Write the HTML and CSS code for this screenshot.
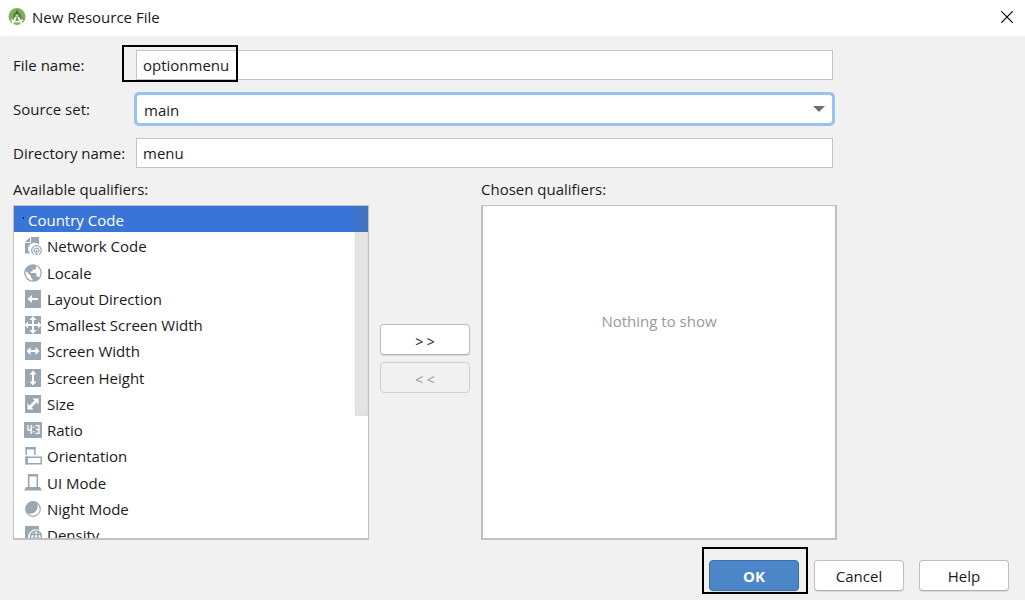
FILE: index.html
```html
<!DOCTYPE html>
<html lang="en">
<head>
<meta charset="utf-8">
<title>New Resource File</title>
<link rel="stylesheet" href="styles.css">
</head>
<body>
<div class="dialog">
  <header class="titlebar">
    <svg class="app-icon" viewBox="0 0 18 19" aria-hidden="true">
      <circle cx="9" cy="8.5" r="8.5" fill="#7ab552"/>
      <path d="M9 4 17 11 14 15 9 12z" fill="#6da446"/>
      <path d="M5 10.500V8a4 4 0 0 1 8 0v2.500L9 12z" fill="#5f7d4c"/>
      <path d="M9 2.500v4" stroke="#44542f" stroke-width="1.600"/>
      <circle cx="9" cy="7.500" r="1.300" fill="#c9d8c1"/>
      <path d="M8 9 3 18M10 9l5 9" stroke="#f2f5f0" stroke-width="2" fill="none"/>
      <path d="M3 12Q9 15.500 15 12" stroke="#f2f5f0" stroke-width="1.600" fill="none"/>
    </svg>
    <h1 class="title">New Resource File</h1>
    <button class="close" type="button" aria-label="Close">
      <svg class="close-icon" viewBox="0 0 12 12" aria-hidden="true"><path d="M.3.3l11.400 11.400M11.700.3L.3 11.700" stroke="#000" stroke-width="1.200"/></svg>
    </button>
  </header>

  <main class="content">
    <form class="fields">
      <label class="label" for="file-name">File name:</label>
      <div class="field marked">
        <input class="input" id="file-name" type="text" value="optionmenu">
      </div>
      <label class="label" for="source-set">Source set:</label>
      <div class="field">
        <select class="input combo" id="source-set"><option>main</option></select>
        <svg class="combo-arrow" viewBox="0 0 12 6" aria-hidden="true"><path d="M0 0h12L6 6z" fill="#6e6e6e"/></svg>
      </div>
      <label class="label" for="dir-name">Directory name:</label>
      <div class="field">
        <input class="input" id="dir-name" type="text" value="menu">
      </div>
    </form>

    <div class="qualifiers">
      <section class="column">
        <h2 class="caption" id="available">Available qualifiers:</h2>
        <div class="panel">
          <ul class="list" role="listbox" aria-labelledby="available">
            <li class="item selected" role="option" aria-selected="true"><span class="dot"></span>Country Code</li>
            <li class="item" role="option"><svg class="icon" viewBox="0 0 18 18"><path d="M1 5 6 0v5zM7 0h8v7.500A6 6 0 0 0 6 16.500H1V6h6z" fill="#9aa7b0"/><path d="M10 17.500a4.800 4.800 0 1 1 5 0M10.800 15.300a2.400 2.400 0 1 1 3.400 0" fill="none" stroke="#9aa7b0" stroke-width="1.200"/><path d="M12.500 13v5.500" stroke="#9aa7b0" stroke-width="1.800"/></svg>Network Code</li>
            <li class="item" role="option"><svg class="icon" viewBox="0 0 18 18"><circle cx="9" cy="9" r="8.800" fill="#9aa7b0"/><path d="M2 7l5 5v1.500l1.500 1.500v1.500A7.300 7.300 0 0 1 2 7zM12 2q4.500 2 4.500 7 0 2.500-1.500 4.500l-1.500-1H12.500V10l-1-1h-5V7.500H8.500V5.500h2.500L12 4.500z" fill="#fff"/></svg>Locale</li>
            <li class="item" role="option"><svg class="icon" viewBox="0 0 18 18"><path d="M1 0h16v18H1z" fill="#9aa7b0"/><path d="M3.500 9 8 5v3h6v2H8v3z" fill="#fff"/></svg>Layout Direction</li>
            <li class="item" role="option"><svg class="icon" viewBox="0 0 18 18"><path d="M1 0h16v18H1z" fill="#9aa7b0"/><path d="M9 0l3.500 4H10v4h4V5.500L17.500 9 14 12.500V10h-4v4h2.500L9 18l-3.500-4H8v-4H4v2.500L.5 9 4 5.500V8h4V4H5.500z" fill="#fff"/></svg>Smallest Screen Width</li>
            <li class="item" role="option"><svg class="icon" viewBox="0 0 18 18"><path d="M1 0h16v18H1z" fill="#9aa7b0"/><path d="M2.500 9 6.500 5v3h5V5l4 4-4 4v-3h-5v3z" fill="#fff"/></svg>Screen Width</li>
            <li class="item" role="option"><svg class="icon" viewBox="0 0 18 18"><path d="M1 0h16v18H1z" fill="#9aa7b0"/><path d="M9 1.500l3.500 4H10v7h2.500l-3.500 4-3.500-4H8v-7H5.500z" fill="#fff"/></svg>Screen Height</li>
            <li class="item" role="option"><svg class="icon" viewBox="0 0 18 18"><path d="M1 0h16v18H1z" fill="#9aa7b0"/><path d="M14.500 3.500v6l-2-2-5 5 2 2h-6v-6l2 2 5-5-2-2z" fill="#fff"/></svg>Size</li>
            <li class="item" role="option"><svg class="icon" viewBox="0 0 18 18"><path d="M0 1h18v16H0z" fill="#9aa7b0"/><path d="M4 4v5h3.500M7.200 4v9M11.500 4.700H15v7.600h-3.500M12 8.500h3" fill="none" stroke="#fff" stroke-width="1.300"/><path d="M8.800 5.500h1.400V7H8.800zM8.800 10h1.400v1.500H8.800z" fill="#fff"/></svg>Ratio</li>
            <li class="item" role="option"><svg class="icon" viewBox="0 0 18 18"><path d="M2.200 8V1h8.600v7M2.200 10.200h15v6.600h-15z" fill="none" stroke="#9aa7b0" stroke-width="1.500"/><path d="M1.500 0h10v2.500h-10zM1.500 9.500H4v8H1.500z" fill="#9aa7b0"/></svg>Orientation</li>
            <li class="item" role="option"><svg class="icon" viewBox="0 0 18 18"><path d="M4.700 13V1.200h8.600V13" fill="none" stroke="#9aa7b0" stroke-width="1.600"/><path d="M4 0h10v2.500H4zM2 13h14l2 3.500H0z" fill="#9aa7b0"/></svg>UI Mode</li>
            <li class="item" role="option"><svg class="icon" viewBox="0 0 18 18"><circle cx="9" cy="9" r="7.300" fill="#fff" stroke="#9aa7b0" stroke-width="1.200"/><path d="M12.500 2.600A7.300 7.300 0 0 0 2.600 12.500C5 14.500 9 14 11.500 11.500 14 9 14.500 5 12.500 2.600z" fill="#9aa7b0"/></svg>Night Mode</li>
            <li class="item" role="option"><svg class="icon" viewBox="0 0 18 18"><path d="M1 0h14v4A7.500 7.500 0 0 0 5 14v4H1z" fill="#9aa7b0"/><circle cx="12" cy="10.500" r="5.500" fill="#fff" stroke="#9aa7b0" stroke-width="1.500"/><path d="M10.200 5v11M13.800 5v11M6.500 8.500h11M6.500 12.300h11" stroke="#9aa7b0" stroke-width="1.400"/></svg>Density</li>
          </ul>
          <div class="scrollbar"></div>
        </div>
      </section>

      <div class="transfer">
        <button class="button arrows" type="button">&gt; &gt;</button>
        <button class="button arrows" type="button" disabled>&lt; &lt;</button>
      </div>

      <section class="column">
        <h2 class="caption">Chosen qualifiers:</h2>
        <div class="panel chosen"><p class="empty">Nothing to show</p></div>
      </section>
    </div>
  </main>

  <footer class="actions">
    <div class="marked-action"><button class="button primary" type="button">OK</button></div>
    <button class="button" type="button">Cancel</button>
    <button class="button" type="button">Help</button>
  </footer>
</div>
</body>
</html>
```

FILE: styles.css
```css
*,
*::after {
  box-sizing: border-box;
}

body {
  margin: 0;
  background: #f1f1f1;
  color: #1a1a1a;
  font: 15px/20px "Open Sans", "Noto Sans", sans-serif;
}

.dialog {
  display: flex;
  flex-direction: column;
  height: 100vh;
}

.titlebar {
  display: flex;
  align-items: center;
  gap: 6px;
  height: 36px;
  padding: 0 10px 2px 8px;
  background: #fff;
}

.app-icon {
  width: 18px;
  height: 19px;
}

.title {
  flex: 1;
  margin: 0;
  font-size: 15px;
  font-weight: 400;
}

.close {
  display: flex;
  padding: 2px;
  border: 0;
  background: none;
}

.close-icon {
  width: 12px;
  height: 12px;
}

.content {
  display: flex;
  flex: 1;
  flex-direction: column;
  gap: 11px;
  min-height: 0;
  padding: 14px 188px 0 13px;
}

.fields {
  display: grid;
  grid-template-columns: 123px 1fr;
  row-gap: 14px;
  align-items: center;
  margin-right: 4px;
}

.field {
  position: relative;
}

.input {
  display: block;
  width: 100%;
  height: 30px;
  padding: 0 6px;
  border: 1px solid #c4c4c4;
  border-radius: 0;
  background: #fff;
  color: inherit;
  font: inherit;
}

.combo {
  appearance: none;
  padding: 2px 7px 0;
  border-color: #87afda;
  border-radius: 3px;
  outline: 3px solid #97c3f3;
  outline-offset: -1px;
}

.combo-arrow {
  position: absolute;
  top: 12px;
  right: 8px;
  width: 12px;
  height: 6px;
  pointer-events: none;
}

/* Black outline that calls out the entered name */
.marked::after {
  content: "";
  position: absolute;
  top: -5px;
  left: -14px;
  width: 116px;
  height: 37px;
  border: 2px solid #000;
  pointer-events: none;
}

.qualifiers {
  display: grid;
  flex: 1;
  grid-template-columns: 1fr 90px 1fr;
  column-gap: 11px;
  min-height: 0;
}

.column {
  display: flex;
  flex-direction: column;
  gap: 6px;
  min-height: 0;
}

.caption {
  margin: 0;
  font-size: 15px;
  font-weight: 400;
}

.panel {
  position: relative;
  flex: 1;
  min-height: 0;
  overflow: hidden;
  border: 1px solid #c0c0c0;
  border-bottom-width: 2px;
  background: #fff;
}

.list {
  margin: 0;
  padding: 0;
  list-style: none;
}

.item {
  display: flex;
  align-items: center;
  gap: 5px;
  height: 26px;
  padding: 2px 10px 0;
}

.item:nth-child(4n + 3) {
  height: 27px;
}

.selected {
  background: #3875d7;
  color: #fff;
}

.dot {
  width: 1px;
  height: 2px;
  margin: 0 -1px 4px -1px;
  background: #000;
}

.icon {
  width: 18px;
  height: 18px;
}

.scrollbar {
  position: absolute;
  top: 0;
  right: 0;
  width: 13px;
  height: 210px;
  border: 1px solid rgba(115, 115, 115, 0.05);
  background: rgba(115, 115, 115, 0.2);
}

.chosen {
  border-width: 1px 2px 2px;
}

.empty {
  margin: 105px 0 0;
  color: #999;
  text-align: center;
}

.transfer {
  display: flex;
  flex-direction: column;
  gap: 7px;
  padding-top: 145px;
}

.button {
  width: 90px;
  height: 31px;
  padding: 1px 0 0;
  border: 1px solid #bfbfbf;
  border-bottom-color: #b0b0b0;
  border-radius: 4px;
  background: #fff;
  color: #1a1a1a;
  font: inherit;
  box-shadow: 0 1px 1px #d8d8d8;
}

.button:disabled {
  border-color: #cfcfcf;
  background: #f1f1f1;
  color: #999;
  box-shadow: none;
}

.arrows {
  padding-top: 4px;
  font-size: 14px;
}

.primary {
  border-color: #3b6fae;
  background: #4a86c8;
  color: #fff;
  font-weight: 700;
}

.actions {
  display: flex;
  justify-content: flex-end;
  gap: 15px;
  padding: 20px 16px 9px;
}

.marked-action {
  position: relative;
}

.marked-action::after {
  content: "";
  position: absolute;
  inset: -13px -9px -3px -7px;
  border: 2px solid #000;
  pointer-events: none;
}
```
